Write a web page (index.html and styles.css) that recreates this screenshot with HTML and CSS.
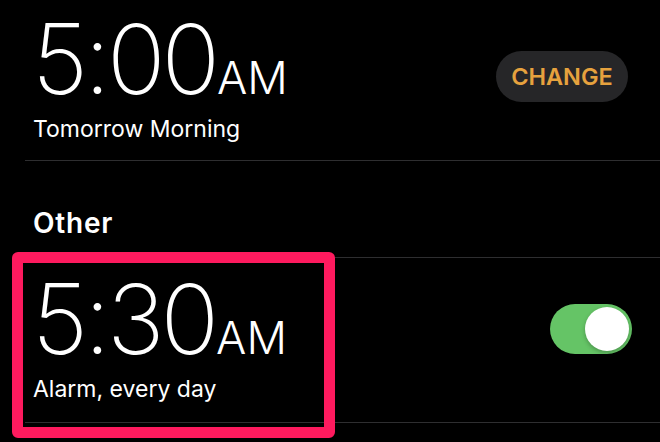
FILE: index.html
```html
<!DOCTYPE html>
<html lang="en">
<head>
  <meta charset="UTF-8">
  <title>Alarm</title>
  <link rel="stylesheet" href="styles.css">
</head>
<body>

  <div class="list">
    <!-- Sleep | Wake Up -->
    <div class="alarm-row first">
      <div class="alarm-info">
        <div class="time"><span class="digits">5:00</span><span class="ampm">AM</span></div>
        <div class="label">Tomorrow Morning</div>
      </div>
      <button class="change-btn" type="button">CHANGE</button>
    </div>

    <div class="section-title">Other</div>

    <div class="alarm-row">
      <div class="alarm-info">
        <div class="time"><span class="digits">5:30</span><span class="ampm">AM</span></div>
        <div class="label">Alarm, every day</div>
      </div>
      <span class="toggle on"></span>
    </div>
  </div>

  <!-- highlight frame over the second alarm -->
  <div class="highlight"></div>

</body>
</html>
```

FILE: styles.css
```css
* {
  box-sizing: border-box;
}

body {
  margin: 0;
  height: 100vh;
  overflow: hidden;
  background: #000;
  color: #fff;
  font-family: Inter, 'Liberation Sans', sans-serif;
  position: relative;
}

.list {
  margin-left: 25px;
}

.alarm-row {
  height: 165px;
  padding: 27px 28px 0 8px;
  display: flex;
  align-items: flex-start;
  justify-content: space-between;
  border-bottom: 1px solid #2e2e30;
}

.alarm-row.first {
  height: 163px;
  margin-top: -2px;
}

.time {
  display: flex;
  align-items: baseline;
  line-height: 68px;
  height: 68px;
}

.digits {
  font-size: 97px;
  font-weight: 200;
  letter-spacing: -4px;
  margin-left: -1px;
}

.ampm {
  font-size: 45px;
  font-weight: 300;
  margin-left: 1px;
}

.label {
  margin-top: 26px;
  font-size: 23px;
  line-height: 20px;
}

.change-btn {
  margin-top: 26px;
  margin-right: 4px;
  width: 132px;
  height: 51px;
  border: none;
  border-radius: 26px;
  background: #262628;
  color: #e6a23e;
  font-family: inherit;
  font-size: 23.5px;
  font-weight: 600;
  cursor: pointer;
}

.section-title {
  height: 97px;
  padding: 0 0 17px 8px;
  display: flex;
  align-items: flex-end;
  font-size: 28px;
  font-weight: 600;
  letter-spacing: 0.8px;
  border-bottom: 1px solid #2e2e30;
}

.toggle {
  margin-top: 19px;
  width: 82px;
  height: 50px;
  border-radius: 25px;
  background: #3a3a3c;
  position: relative;
}

.toggle.on {
  background: #65c466;
}

.toggle::after {
  content: '';
  position: absolute;
  top: 3px;
  right: 3px;
  width: 44px;
  height: 44px;
  border-radius: 50%;
  background: #fff;
  box-shadow: 0 2px 4px rgba(0, 0, 0, 0.25);
}

.highlight {
  position: absolute;
  left: 12px;
  top: 252px;
  width: 323px;
  height: 186px;
  border: 11px solid #fe1a5e;
  border-radius: 6px;
  pointer-events: none;
}
```
